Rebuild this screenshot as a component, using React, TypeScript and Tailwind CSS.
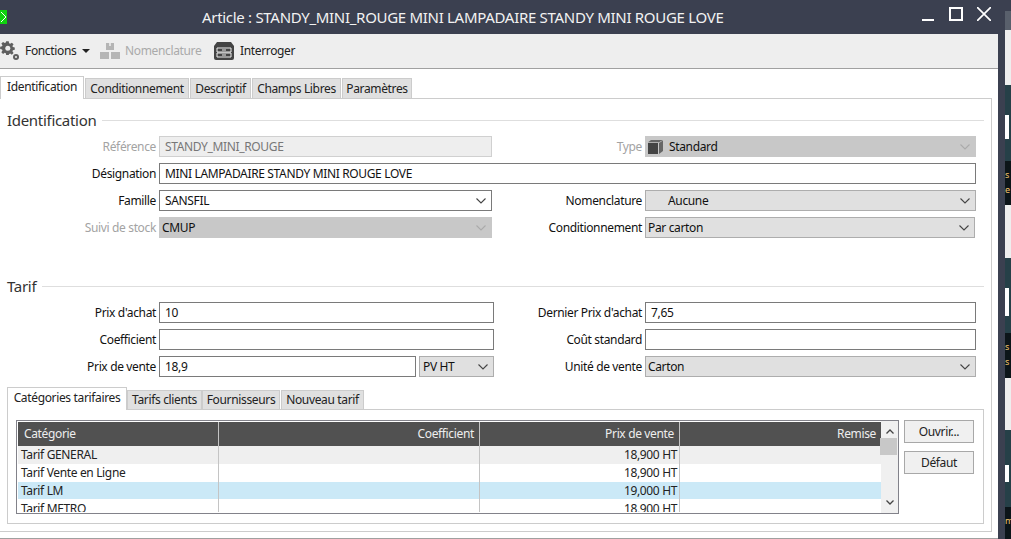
import React from 'react';

const Chevron = ({ className = 'text-[#444]' }: { className?: string }) => (
  <svg viewBox="0 0 10 6" className={`w-[10px] h-[6px] shrink-0 ${className}`} fill="none" stroke="currentColor" strokeWidth="1.1">
    <path d="M0.5 0.5 L5 5 L9.5 0.5" />
  </svg>
);

const GearIcon = () => (
  <svg viewBox="0 0 20 20" className="w-5 h-5 shrink-0">
    <g fill="#5f5f5f">
      <path d="M6 1h3l.4 2.2 1.3.6L12.600 2.500l2 2-1.300 1.900.5 1.300 2.200.4v2.800l-2.200.4-.5 1.300 1.300 1.900-2 2-1.900-1.300-1.300.5L9 17H6l-.4-2.200-1.300-.5-1.900 1.300-2-2 1.300-1.900-.5-1.300L-1 10V7.200l2.200-.4.5-1.300L.4 3.600l2-2 1.900 1.300 1.300-.6z" transform="translate(1 -.5) scale(.86)" />
      <circle cx="16" cy="16" r="3" />
    </g>
    <circle cx="7.800" cy="7.300" r="2.500" fill="#eeeeee" />
    <circle cx="16" cy="16" r="1" fill="#eeeeee" />
  </svg>
);

const BoxesIcon = () => (
  <svg viewBox="0 0 20 18" className="w-5 h-[18px] shrink-0" fill="#b5b5b5">
    <path d="M6 1h8v7H6z" />
    <path d="M0 10h9v7H0z" />
    <path d="M11 10h9v7h-9z" />
    <path d="M9 1h2v3H9z" fill="#e2e2e2" />
  </svg>
);

const CabinetIcon = () => (
  <svg viewBox="0 0 20 18" className="w-5 h-[18px] shrink-0">
    <path d="M3 0h14l3 4v12a2 2 0 0 1-2 2H2a2 2 0 0 1-2-2V4z" fill="#444" />
    <path d="M3 6h14v4H3zM3 11h14v4H3z" fill="none" stroke="#eee" strokeWidth="1" />
    <path d="M8 8h4M8 13h4" stroke="#eee" strokeWidth="1" />
  </svg>
);

const CubeIcon = () => (
  <svg viewBox="0 0 15 14" className="w-[15px] h-[14px] shrink-0" fill="#444">
    <path d="M0 3h10v11H0z" />
    <path d="M0 2.300 3 0h12l-4 2.300z" fill="#666" />
    <path d="M11 3l4-2.500V11l-4 3z" fill="#666" />
  </svg>
);

const FieldLabel = ({ children, disabled }: { children: React.ReactNode; disabled?: boolean }) => (
  <div className={`text-right leading-[21px] whitespace-nowrap ${disabled ? 'text-[#a3a3a3]' : 'text-[#111]'}`}>{children}</div>
);

const TextBox = ({ value, className = '' }: { value?: string; className?: string }) => (
  <div className={`h-[21px] border border-[#7a7a7a] bg-white pl-[5px] leading-[19px] text-[#111] whitespace-nowrap ${className}`}>{value}</div>
);

const Combo = ({ value, disabled, icon, indent, className = '' }: { value: string; disabled?: boolean; icon?: React.ReactNode; indent?: boolean; className?: string }) => (
  <div
    className={`h-[21px] border flex items-center pr-[5px] text-[#111] whitespace-nowrap ${disabled ? 'bg-[#c8c8c8] border-[#c8c8c8]' : 'bg-[#e0e0e0] border-[#adadad]'} ${className}`}
  >
    <div className={`flex-1 flex items-center gap-[6px] ${indent ? 'pl-[22px]' : 'pl-[2px]'}`}>
      {icon}
      {value}
    </div>
    <Chevron className={disabled ? 'text-[#aaa]' : 'text-[#444]'} />
  </div>
);

const MainTab = ({ label, active, className = '' }: { label: string; active?: boolean; className?: string }) => (
  <div
    className={`flex items-center justify-center whitespace-nowrap text-[#222] border border-[#ccc] ${
      active ? 'h-[23px] bg-white border-b-0 -mb-px relative z-10 pb-[3px]' : 'h-[20px] bg-[#e0e0e0] border-b-0'
    } ${className}`}
  >
    {label}
  </div>
);

const SectionTitle = ({ children }: { children: React.ReactNode }) => (
  <div className="flex items-center gap-[6px] h-[20px] pl-[7px] pr-[7px]">
    <span className="text-[15px] tracking-[-0.3px] text-[#333] leading-none">{children}</span>
    <div className="flex-1 h-px bg-[#dedede]" />
  </div>
);

const columns = [
  { width: 'w-[201px]', align: 'text-left' },
  { width: 'w-[261px]', align: 'text-right' },
  { width: 'w-[200px]', align: 'text-right' },
  { width: 'w-[201px]', align: 'text-right' },
];

const rows = [
  { name: 'Tarif GENERAL', price: '18,900 HT', bg: 'bg-[#efefef] h-[18px]' },
  { name: 'Tarif Vente en Ligne', price: '18,900 HT', bg: 'bg-white h-[18px]' },
  { name: 'Tarif LM', price: '19,000 HT', bg: 'bg-[#cbe9f7] h-[17px] leading-[17px]' },
  { name: 'Tarif METRO', price: '18,900 HT', bg: 'bg-white h-[18px] leading-[19px]' },
];

const TariffTable = () => (
  <div className="w-[883px] h-[94px] border border-[#82828a] flex overflow-hidden">
    <div className="w-[864px] h-[91px] pl-px pt-px overflow-hidden">
      <div className="flex h-[24px] bg-[#515151] text-[#eee] leading-[24px]">
        <div className={`${columns[0].width} pl-[6px] border-r border-[#c4c4c4]`}>Catégorie</div>
        <div className={`${columns[1].width} pr-[5px] text-right border-r border-[#c4c4c4]`}>Coefficient</div>
        <div className={`${columns[2].width} pr-[5px] text-right border-r border-[#c4c4c4]`}>Prix de vente</div>
        <div className={`${columns[3].width} pr-[5px] text-right`}>Remise</div>
      </div>
      {rows.map((row) => (
        <div key={row.name} className={`flex text-[#222] leading-[18px] ${row.bg}`}>
          <div className={`${columns[0].width} pl-[3px] border-r border-[#c4c4c4]`}>{row.name}</div>
          <div className={`${columns[1].width} border-r border-[#c4c4c4]`} />
          <div className={`${columns[2].width} pr-[2px] text-right border-r border-[#c4c4c4]`}>{row.price}</div>
          <div className={columns[3].width} />
        </div>
      ))}
    </div>
    <div className="flex-1 bg-[#f0f0f0] flex flex-col items-center">
      <svg viewBox="0 0 8 5" className="w-2 h-[5px] mt-[8px] mb-[4px]" fill="none" stroke="#444" strokeWidth="1.300">
        <path d="M.5 4.500 4 1l3.500 3.500" />
      </svg>
      <div className="w-full h-[17px] bg-[#c8c8c8] mr-[3px]" />
      <div className="flex-1" />
      <svg viewBox="0 0 8 5" className="w-2 h-[5px] mb-[8px]" fill="none" stroke="#444" strokeWidth="1.300">
        <path d="M.5.500 4 4l3.500-3.500" />
      </svg>
    </div>
  </div>
);

const SideButton = ({ label }: { label: string }) => (
  <div className="w-[70px] h-[23px] border border-[#a8a8a8] bg-[#f0f0f0] flex items-center justify-center text-[#222]">{label}</div>
);

const DesktopSlice = ({ className, children }: { className: string; children?: React.ReactNode }) => (
  <div className={`overflow-hidden ${className}`}>{children}</div>
);

export default function App() {
  return (
    <div className="w-[1011px] h-[539px] overflow-hidden flex bg-[#3b4050] text-[12px] tracking-[-0.35px] font-['Noto_Sans','Open_Sans',sans-serif]">
      <div className="w-[1005px] flex flex-col shrink-0">
        {/* Title bar */}
        <div className="h-[34px] shrink-0 bg-[#3b4050] flex items-center text-white pr-[14px]">
          <div className="w-[7px] h-[14px] bg-[#0fd10f] shrink-0">
            <svg viewBox="0 0 7 14" className="w-[7px] h-[14px]" fill="none" stroke="white" strokeWidth="1">
              <path d="M1 2l5 5-5 5" />
            </svg>
          </div>
          <div className="flex-1 pl-[195px] text-[15px] tracking-[-0.3px] whitespace-nowrap text-[#f2f2f2]">Article : STANDY_MINI_ROUGE MINI LAMPADAIRE STANDY MINI ROUGE LOVE</div>
          <div className="w-[12px] h-[2px] bg-white mt-[6px] mr-[15px]" />
          <div className="w-[14px] h-[14px] border-2 border-white mr-[14px] -mt-[6px]" />
          <svg viewBox="0 0 14 14" className="w-[14px] h-[14px] -mt-[6px]" stroke="white" strokeWidth="1.700">
            <path d="M0 0l14 14M14 0 0 14" />
          </svg>
        </div>

        <div className="flex-1 w-[998px] bg-white flex flex-col">
          {/* Toolbar */}
          <div className="h-[35px] shrink-0 bg-[#eeeeee] border-b border-[#a0a0a0] flex items-center text-[#222]">
            <GearIcon />
            <span className="ml-[5px] w-[52px] whitespace-nowrap">Fonctions</span>
            <span className="ml-[5px] border-x-[4px] border-x-transparent border-t-[4px] border-t-[#222]" />
            <span className="ml-[10px]"><BoxesIcon /></span>
            <span className="ml-[5px] w-[76px] text-[#aaa] whitespace-nowrap">Nomenclature</span>
            <span className="ml-[13px]"><CabinetIcon /></span>
            <span className="ml-[6px]">Interroger</span>
          </div>

          {/* Main tabs */}
          <div className="h-[29px] shrink-0 flex items-end gap-px">
            <MainTab label="Identification" active className="w-[84px]" />
            <MainTab label="Conditionnement" className="w-[104px]" />
            <MainTab label="Descriptif" className="w-[61px]" />
            <MainTab label="Champs Libres" className="w-[89px]" />
            <MainTab label="Paramètres" className="w-[70px]" />
          </div>

          {/* Main panel */}
          <div className="w-[992px] h-[434px] border border-[#ccc] border-l-0 shrink-0 pt-[11px]">
            <SectionTitle>Identification</SectionTitle>
            <div className="grid grid-cols-[156px_333px_147px_331px] gap-x-[3px] gap-y-[6px] mt-[6px]">
              <FieldLabel disabled>Référence</FieldLabel>
              <TextBox value="STANDY_MINI_ROUGE" className="!bg-[#eeeeee] !border-[#d0d0d0] !text-[#777]" />
              <FieldLabel disabled>Type</FieldLabel>
              <Combo value="Standard" disabled icon={<CubeIcon />} />

              <FieldLabel>Désignation</FieldLabel>
              <TextBox value="MINI LAMPADAIRE STANDY MINI ROUGE LOVE" className="col-span-3" />

              <FieldLabel>Famille</FieldLabel>
              <Combo value="SANSFIL" className="!bg-white !border-[#7a7a7a] !pl-[3px]" />
              <FieldLabel>Nomenclature</FieldLabel>
              <Combo value="Aucune" indent />

              <FieldLabel disabled>Suivi de stock</FieldLabel>
              <Combo value="CMUP" disabled />
              <FieldLabel>Conditionnement</FieldLabel>
              <Combo value="Par carton" className="w-[330px]" />
            </div>

            <div className="mt-[38px]">
              <SectionTitle>Tarif</SectionTitle>
            </div>
            <div className="grid grid-cols-[156px_335px_145px_331px] gap-x-[3px] gap-y-[6px] mt-[6px]">
              <FieldLabel>Prix d'achat</FieldLabel>
              <TextBox value="10" />
              <FieldLabel>Dernier Prix d'achat</FieldLabel>
              <TextBox value="7,65" />

              <FieldLabel>Coefficient</FieldLabel>
              <TextBox />
              <FieldLabel>Coût standard</FieldLabel>
              <TextBox />

              <FieldLabel>Prix de vente</FieldLabel>
              <div className="flex gap-[3px]">
                <TextBox value="18,9" className="w-[257px]" />
                <Combo value="PV HT" className="flex-1 !bg-[#e0e0e0] !pl-[1px]" />
              </div>
              <FieldLabel>Unité de vente</FieldLabel>
              <Combo value="Carton" />
            </div>

            {/* Price tabs */}
            <div className="flex items-end ml-[7px] mt-[10px] h-[22px]">
              <MainTab label="Catégories tarifaires" active className="w-[120px]" />
              <MainTab label="Tarifs clients" className="w-[75px] !h-[19px]" />
              <MainTab label="Fournisseurs" className="w-[78px] !h-[19px]" />
              <MainTab label="Nouveau tarif" className="w-[83px] ml-px !h-[19px]" />
            </div>
            <div className="ml-[7px] w-[977px] h-[115px] border border-[#ccc] flex gap-[5px] pl-[8px] pt-[10px]">
              <TariffTable />
              <div className="flex flex-col gap-[8px]">
                <SideButton label="Ouvrir..." />
                <SideButton label="Défaut" />
              </div>
            </div>
          </div>
          <div className="flex-1" />
          <div className="h-px bg-[#a0a0a0]" />
        </div>
      </div>

      {/* Slice of the desktop behind the window */}
      <div className="flex-1 flex flex-col text-[9px] leading-[15px]">
        <DesktopSlice className="h-[11px] bg-[#3b4050]" />
        <DesktopSlice className="h-[19px] bg-[#59606c]" />
        <DesktopSlice className="h-[55px] bg-[#eeeeee]" />
        <DesktopSlice className="h-[76px] bg-[#264048] pt-[30px]">
          <div className="w-[4px] h-[24px] bg-white" />
        </DesktopSlice>
        <DesktopSlice className="h-[44px] bg-[#0c1519] text-[#f2c46d] pt-[6px]">s<br />e</DesktopSlice>
        <DesktopSlice className="h-[53px] bg-[#eeeeee]" />
        <DesktopSlice className="h-[75px] bg-[#264048] pt-[30px]">
          <div className="w-[4px] h-[28px] bg-white" />
        </DesktopSlice>
        <DesktopSlice className="h-[45px] bg-[#0c1519] text-[#f2c46d] pt-[6px]">s<br />s</DesktopSlice>
        <DesktopSlice className="h-[52px] bg-[#eeeeee]" />
        <DesktopSlice className="h-[77px] bg-[#264048] pt-[35px]">
          <div className="w-[4px] h-[17px] bg-white" />
        </DesktopSlice>
        <DesktopSlice className="h-[32px] bg-[#0c1519] text-[#f2c46d] pt-[6px]">m</DesktopSlice>
      </div>
    </div>
  );
}
